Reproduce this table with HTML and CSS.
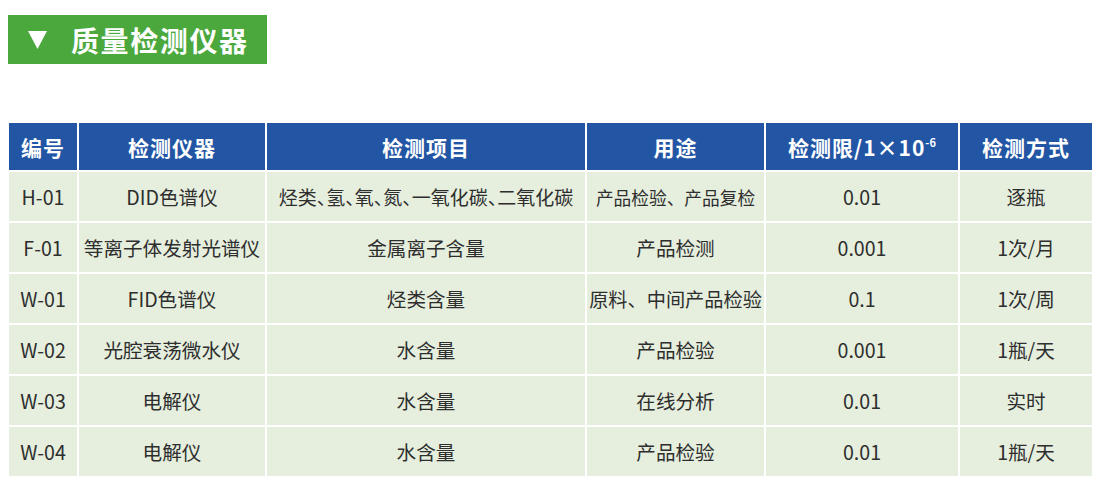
FILE: index.html
```html
<!DOCTYPE html>
<html lang="zh-CN">
<head>
<meta charset="utf-8">
<link rel="stylesheet" href="styles.css">
</head>
<body>
<div class="title">
  <svg class="tri" width="19" height="18" viewBox="0 0 19 18"><polygon points="0,0 19,0 9.5,18" fill="#fff"/></svg>
  <span class="title-text">质量检测仪器</span>
</div>
<table class="spec">
  <colgroup>
    <col style="width:69px"><col style="width:188px"><col style="width:320px"><col style="width:179px"><col style="width:194px"><col style="width:133px">
  </colgroup>
  <thead>
    <tr><th>编号</th><th>检测仪器</th><th>检测项目</th><th>用途</th><th>检测限/1×10<span class="sup">-6</span></th><th>检测方式</th></tr>
  </thead>
  <tbody>
    <tr><td>H-01</td><td>DID色谱仪</td><td class="halt">烃类、氢、氧、氮、一氧化碳、二氧化碳</td><td class="tight">产品检验、产品复检</td><td>0.01</td><td>逐瓶</td></tr>
    <tr><td>F-01</td><td>等离子体发射光谱仪</td><td>金属离子含量</td><td>产品检测</td><td>0.001</td><td>1次/月</td></tr>
    <tr><td>W-01</td><td>FID色谱仪</td><td>烃类含量</td><td class="fit">原料、中间产品检验</td><td>0.1</td><td>1次/周</td></tr>
    <tr><td>W-02</td><td>光腔衰荡微水仪</td><td>水含量</td><td>产品检验</td><td>0.001</td><td>1瓶/天</td></tr>
    <tr><td>W-03</td><td>电解仪</td><td>水含量</td><td>在线分析</td><td>0.01</td><td>实时</td></tr>
    <tr><td>W-04</td><td>电解仪</td><td>水含量</td><td>产品检验</td><td>0.01</td><td>1瓶/天</td></tr>
  </tbody>
</table>
</body>
</html>
```

FILE: styles.css
```css
html, body {
  margin: 0;
  padding: 0;
  background: #fff;
}
body {
  font-family: "Noto Sans CJK SC", "Noto Sans", sans-serif;
  color: #333;
}
.title {
  margin: 15px 0 0 8px;
  width: 259px;
  height: 49px;
  background: #4aa83d;
  display: flex;
  align-items: center;
  box-sizing: border-box;
  padding-left: 20px;
}
.tri {
  display: block;
  margin-right: 24px;
}
.title-text {
  color: #fff;
  font-size: 28px;
  font-weight: 700;
  letter-spacing: 1.6px;
  line-height: 1;
}
.spec {
  margin: 59px 0 0 9px;
  width: 1083px;
  table-layout: fixed;
  border-collapse: collapse;
}
.spec th, .spec td {
  border: 2px solid #fff;
  text-align: center;
  padding: 0;
  white-space: nowrap;
  overflow: hidden;
}
.spec tr > :first-child { border-left: 0; }
.spec tr > :last-child { border-right: 0; }
.spec thead th { border-top: 0; }
.spec tbody tr:last-child td { border-bottom: 0; }
.spec th {
  background: #2255a4;
  color: #fff;
  font-size: 21px;
  font-weight: 700;
  letter-spacing: 1px;
  height: 47px;
}
.sup {
  font-size: 11px;
  vertical-align: 9px;
  letter-spacing: 0;
}
.spec td {
  background: #e6efde;
  font-size: 19.6px;
  height: 49px;
  color: #2e2e2e;
}
.spec td.halt {
  font-size: 19px;
  font-feature-settings: "halt";
}
.spec td.tight {
  font-size: 17.7px;
}
.spec td.fit {
  font-size: 19.2px;
}
```
